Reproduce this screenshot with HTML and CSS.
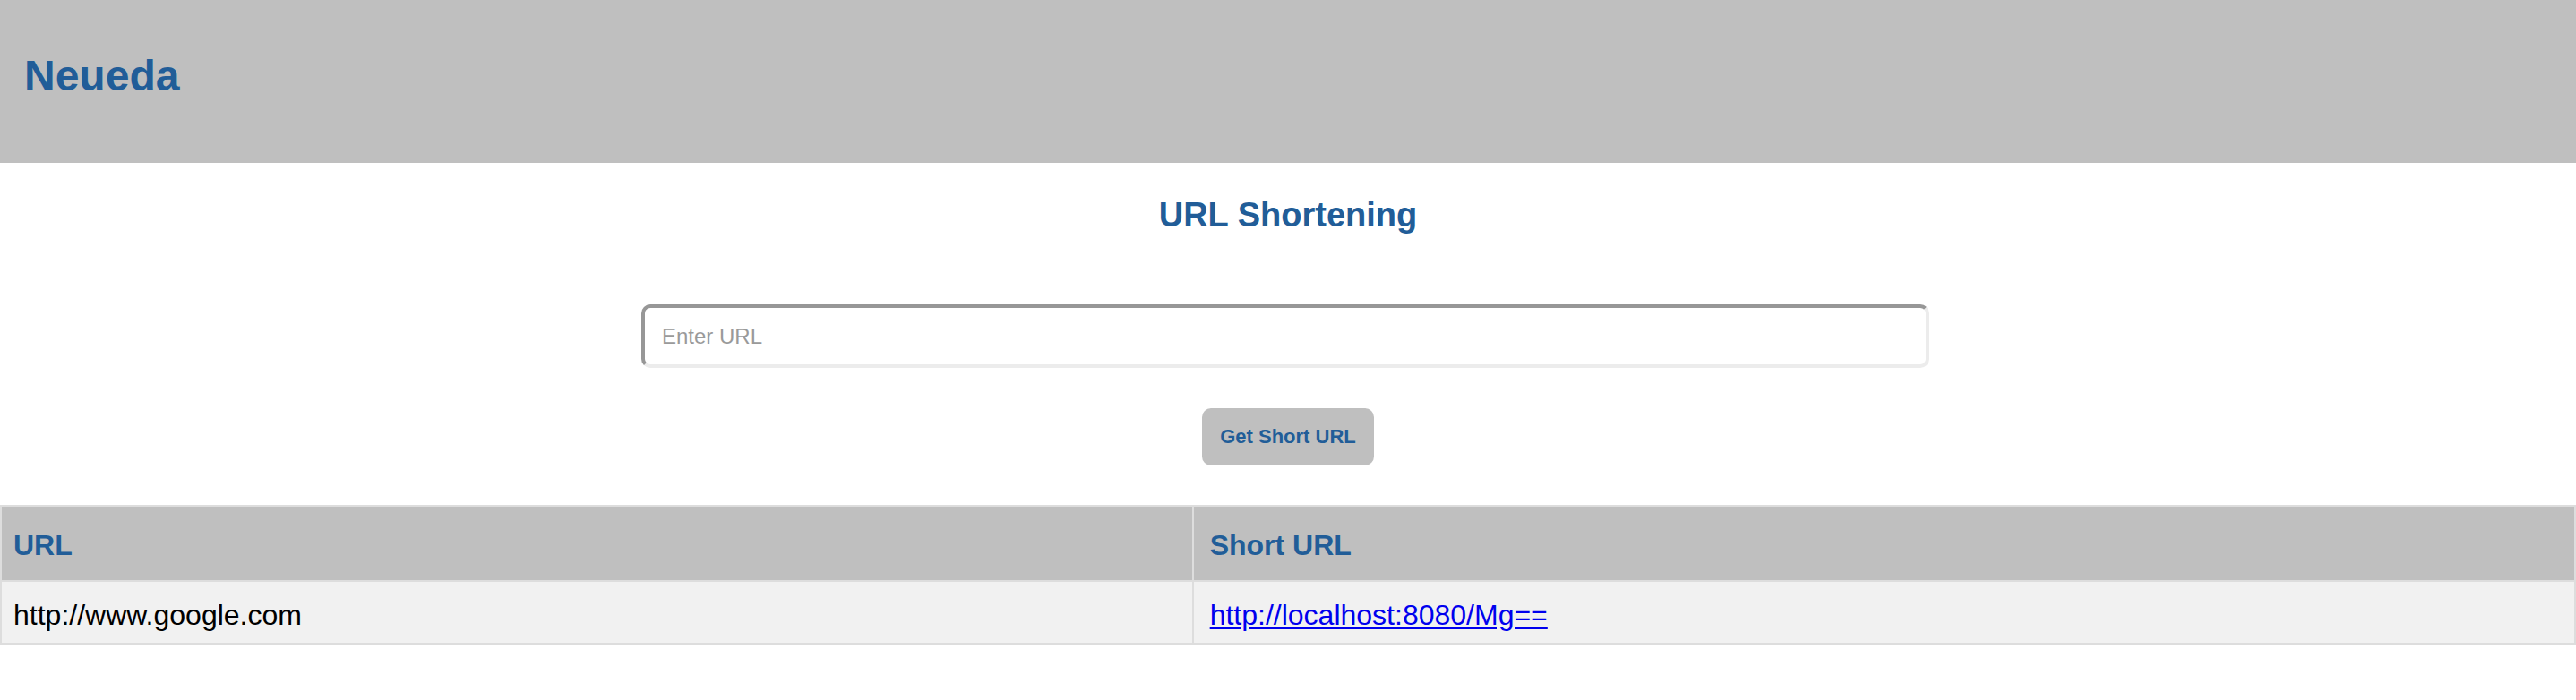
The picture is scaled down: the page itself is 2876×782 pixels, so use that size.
FILE: index.html
```html
<!DOCTYPE html>
<html lang="en">
<head>
<meta charset="utf-8">
<title>Neueda - URL Shortening</title>
<link rel="stylesheet" href="styles.css">
</head>
<body>
<header class="topbar">
  <h1 class="brand">Neueda</h1>
</header>
<main class="content">
  <h2 class="title">URL Shortening</h2>
  <form class="shorten">
    <input class="url-input" type="text" placeholder="Enter URL">
    <button class="shorten-btn" type="button">Get Short URL</button>
  </form>
  <table class="urls">
    <thead>
      <tr>
        <th class="col-url">URL</th>
        <th class="col-short">Short URL</th>
      </tr>
    </thead>
    <tbody>
      <tr>
        <td class="col-url">http://www.google.com</td>
        <td class="col-short"><a class="short-link" href="#">http://localhost:8080/Mg==</a></td>
      </tr>
    </tbody>
  </table>
</main>
</body>
</html>
```

FILE: styles.css
```css
html, body {
  margin: 0;
  padding: 0;
  background: #ffffff;
  font-family: "Liberation Sans", Arial, Helvetica, sans-serif;
}

.topbar {
  background: #bfbfbf;
  height: 182px;
  box-sizing: border-box;
  padding: 57px 27px 0;
}

.brand {
  margin: 0;
  font-size: 48px;
  font-weight: bold;
  color: #215d98;
  line-height: normal;
}

.content {
  display: flex;
  flex-direction: column;
  align-items: center;
}

.title {
  margin: 37px 0 0;
  font-size: 38px;
  font-weight: bold;
  color: #215d98;
  line-height: normal;
}

.shorten {
  width: 100%;
  display: flex;
  flex-direction: column;
  align-items: center;
  margin-top: 78px;
}

.url-input {
  box-sizing: border-box;
  width: 50%;
  height: 71px;
  margin: 0 0 0 -6px;
  padding: 0 19px;
  border: 4px solid;
  border-color: #979797 #ececec #ececec #979797;
  border-radius: 10px;
  font-family: "Liberation Sans", Arial, sans-serif;
  font-size: 24px;
  color: #333;
  background: #fff;
  outline: none;
}

.url-input::placeholder {
  color: #9a9a9a;
}

.shorten-btn {
  margin-top: 45px;
  width: 192px;
  height: 64px;
  padding: 0;
  border: none;
  border-radius: 10px;
  background: #bfbfbf;
  color: #215d98;
  font-family: "Liberation Sans", Arial, sans-serif;
  font-size: 22px;
  font-weight: bold;
  cursor: pointer;
}

.urls {
  width: 100%;
  margin-top: 44px;
  border-collapse: collapse;
  border: 2px solid #dddddd;
}

.urls th,
.urls td {
  border: 2px solid #dddddd;
  text-align: left;
  font-size: 32px;
  line-height: normal;
}

.urls th {
  background: #bfbfbf;
  color: #215d98;
  font-weight: bold;
  height: 84px;
  box-sizing: border-box;
  padding: 4px 14px 0 13px;
}

.urls td {
  background: #f1f1f1;
  color: #000;
  padding: 19px 14px 12px 13px;
}

.urls .col-url {
  width: 46.3%;
}

.urls .col-short {
  padding-left: 18px;
}

.short-link {
  color: #0000ee;
  text-decoration: underline;
}
```
